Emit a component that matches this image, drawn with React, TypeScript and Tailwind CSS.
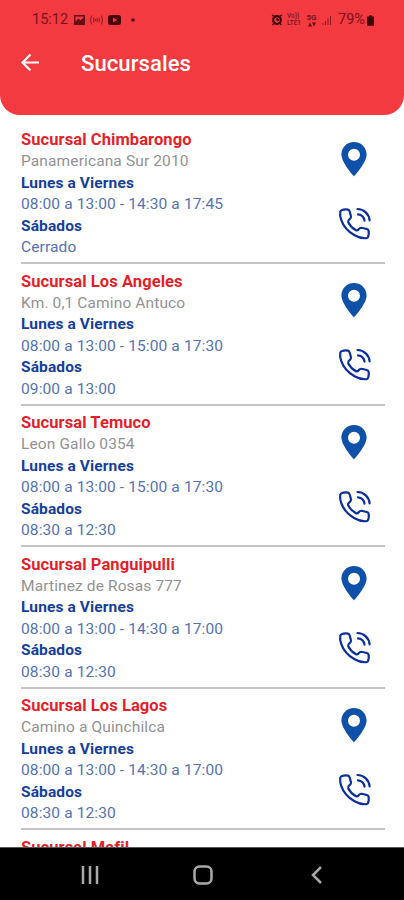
import React, { JSX } from "react";

interface Branch {
  id: string;
  name: string;
  address: string;
  weekdays: string;
  saturday: string;
}

const branches: Branch[] = [
  {
    id: "chimbarongo",
    name: "Sucursal Chimbarongo",
    address: "Panamericana Sur 2010",
    weekdays: "08:00 a 13:00 - 14:30 a 17:45",
    saturday: "Cerrado",
  },
  {
    id: "los-angeles",
    name: "Sucursal Los Angeles",
    address: "Km. 0,1 Camino Antuco",
    weekdays: "08:00 a 13:00 - 15:00 a 17:30",
    saturday: "09:00 a 13:00",
  },
  {
    id: "temuco",
    name: "Sucursal Temuco",
    address: "Leon Gallo 0354",
    weekdays: "08:00 a 13:00 - 15:00 a 17:30",
    saturday: "08:30 a 12:30",
  },
  {
    id: "panguipulli",
    name: "Sucursal Panguipulli",
    address: "Martinez de Rosas 777",
    weekdays: "08:00 a 13:00 - 14:30 a 17:00",
    saturday: "08:30 a 12:30",
  },
  {
    id: "los-lagos",
    name: "Sucursal Los Lagos",
    address: "Camino a Quinchilca",
    weekdays: "08:00 a 13:00 - 14:30 a 17:00",
    saturday: "08:30 a 12:30",
  },
];

function PinIcon(): JSX.Element {
  return (
    <svg className="w-[26px] h-[35px]" viewBox="0 0 26 35" fill="#0f51a8">
      <path
        fillRule="evenodd"
        d="M13 0C5.800 0 .400 5.500.400 12.600.400 21 13 34.500 13 34.500s12.600-13.500 12.600-21.900C25.600 5.500 20.200 0 13 0Zm0 6.700a6 6 0 1 1 0 12 6 6 0 0 1 0-12Z"
      />
    </svg>
  );
}

function CallIcon(): JSX.Element {
  return (
    <svg
      className="w-[34px] h-[34px]"
      viewBox="-1 0 34 34"
      fill="none"
      stroke="#0c2f9b"
      strokeWidth="2.200"
      strokeLinecap="round"
      strokeLinejoin="round"
    >
      <path d="M4 3C6 2.200 8.200 2.200 10 2.600C11.200 2.900 11.500 3.800 11.800 4.800L13 9.500C13.200 10.800 12.500 11.400 11.600 12.200C10.300 13.200 9.700 14 10.200 15.200C11.800 18.500 14.500 21.300 18 23.300C19.200 23.900 19.900 23.300 20.900 22C21.700 21 22.300 20.600 23.600 20.800L28.800 22C30 22.300 30.600 22.800 30.700 24C30.900 26 30.800 28 30.200 29.700C29.900 30.700 29.300 31.100 28.300 31.200C24 31.500 20 30.200 16.500 28.200C10 24.500 5.500 19.500 3.200 12.800C2.200 10 1.900 7.200 2.300 4.800C2.500 3.700 3 3.300 4 3Z" />
      <path d="M19.500 2C26 2.200 31 7 31.600 13.300" />
      <path d="M20 7.400C23.500 7.800 26 10.200 26.500 13.700" />
    </svg>
  );
}

function StatusBar(): JSX.Element {
  return (
    <div className="flex h-10 items-center justify-between pl-8 pr-[30px] text-[14.500px] text-[#7b141c]">
      <div className="flex items-center">
        <span className="w-[37px]">15:12</span>
        <svg className="ml-[5px] w-[63px] h-3" viewBox="0 0 63 12">
          <path fill="#650f15" fillRule="evenodd" d="M0 1h11v10H0Zm1.500 1.500v5l3-3 2 2 3-3v-1Z" />
          <g fill="none" stroke="#8c1a22">
            <path d="M17.500 1.500q-2 4.500 0 9M27.500 1.500q2 4.500 0 9M20 3.500q-1 2.500 0 5M25 3.500q1 2.500 0 5" />
            <circle cx="22.500" cy="6" r="1.200" />
          </g>
          <rect x="34" y="1" width="13" height="10" rx="2.500" fill="#4a080d" />
          <path d="m39 3.500 4 2.500-4 2.500Z" fill="#f23a40" />
          <circle cx="59" cy="6" r="1.800" fill="#4a080d" />
        </svg>
      </div>
      <div className="flex items-center">
        <svg className="w-[12px] h-3" viewBox="0 0 11 12">
          <circle cx="5.500" cy="6" r="3.800" fill="none" stroke="#3d060a" strokeWidth="2.200" />
          <path d="M.5 1 3 2.500M10.500 1 8 2.500M1 11l2-2M10 11 8 9M5.500 4v2h2" stroke="#3d060a" strokeWidth="1.300" />
        </svg>
        <div className="ml-[4px] w-[16px] text-[6.500px] leading-[7px] font-medium">
          <p>Vo))</p>
          <p>LTE1</p>
        </div>
        <div className="ml-[2px] flex w-[13px] flex-col items-center text-[8px] leading-[8px] font-bold">
          <p>5G</p>
          <svg className="w-[8px] h-[5px]" viewBox="0 0 8 5" fill="#650f15">
            <path d="M0 4.500 2 .5l2 4ZM4 .5h4l-2 4Z" />
          </svg>
        </div>
        <svg className="ml-1 w-[10px] h-3" viewBox="0 0 10 12" stroke="#8c1a22">
          <path d="M1 11V9M3.500 11V7M6 11V4.500M8.500 11V2" />
        </svg>
        <span className="ml-[6px] w-[28px]">79%</span>
        <svg className="ml-[1px] w-[7px] h-[11px]" viewBox="0 0 8 12" fill="#3d060a">
          <path d="M2.500 0h3v1.500H8V12H0V1.500h2.500Z" />
        </svg>
      </div>
    </div>
  );
}

function Header(): JSX.Element {
  return (
    <header className="h-[115px] shrink-0 rounded-b-[20px] bg-[#f23a40]">
      <StatusBar />
      <div className="flex h-[46px] items-center pl-5">
        <svg
          className="w-5 h-5"
          viewBox="0 0 20 20"
          fill="none"
          stroke="#fff"
          strokeWidth="2.200"
        >
          <path d="M19 9.500H2.500M10.500 1.500l-8 8 8 8" />
        </svg>
        <h1 className="ml-[41px] text-[22px] font-medium tracking-[0.1px] text-white">
          Sucursales
        </h1>
      </div>
    </header>
  );
}

function BranchRow({ branch }: { branch: Branch }): JSX.Element {
  return (
    <li className="flex h-[141.600px] shrink-0 justify-between border-b-2 border-[#c4c4c4] pt-[6px]">
      <div className="pt-[0.500px] text-[15.500px] leading-[21.500px] tracking-[0.120px] whitespace-nowrap text-[#5572b4]">
        <h2 className="text-[16.500px] leading-[22px] tracking-[0.080px] font-bold text-[#e41f2a]">
          {branch.name}
        </h2>
        <p className="text-[#929292]">{branch.address}</p>
        <p className="font-bold text-[#163f9b]">Lunes a Viernes</p>
        <p>{branch.weekdays}</p>
        <p className="font-bold text-[#163f9b]">Sábados</p>
        <p>{branch.saturday}</p>
      </div>
      <div className="flex w-[34px] flex-col items-center mr-[14px] pt-[13px] gap-[30px]">
        <PinIcon />
        <CallIcon />
      </div>
    </li>
  );
}

function NavigationBar(): JSX.Element {
  return (
    <nav className="flex h-[53px] shrink-0 items-center bg-black border-t border-[#555] pt-[2px] pl-[81px]">
      <svg className="w-[18px] h-[18px]" viewBox="0 0 18 18" stroke="#a8a8a8" strokeWidth="2.500">
        <path d="M2 0v18M9 0v18M16 0v18" />
      </svg>
      <svg className="ml-[94px] w-5 h-5" viewBox="0 0 20 20" fill="none" stroke="#a8a8a8" strokeWidth="2.500">
        <rect x="1.500" y="1.500" width="17" height="17" rx="5" />
      </svg>
      <svg className="ml-[98px] w-[12px] h-[18px]" viewBox="0 0 12 18" fill="none" stroke="#a8a8a8" strokeWidth="2.500">
        <path d="m10 1-8 8 8 8" />
      </svg>
    </nav>
  );
}

export default function App(): JSX.Element {
  return (
    <div className="flex h-[900px] w-[404px] flex-col overflow-hidden bg-white font-['Roboto',sans-serif]">
      <Header />
      <main className="min-h-0 flex-1 overflow-hidden pt-[7.500px] pl-[21px] pr-[19px]">
        <ul className="flex flex-col">
          {branches.map((branch) => (
            <BranchRow key={branch.id} branch={branch} />
          ))}
          <li className="pt-[6.500px] text-[16.500px] leading-[22px] tracking-[0.080px] font-bold text-[#e41f2a]">
            Sucursal Mafil
          </li>
        </ul>
      </main>
      <NavigationBar />
    </div>
  );
}
